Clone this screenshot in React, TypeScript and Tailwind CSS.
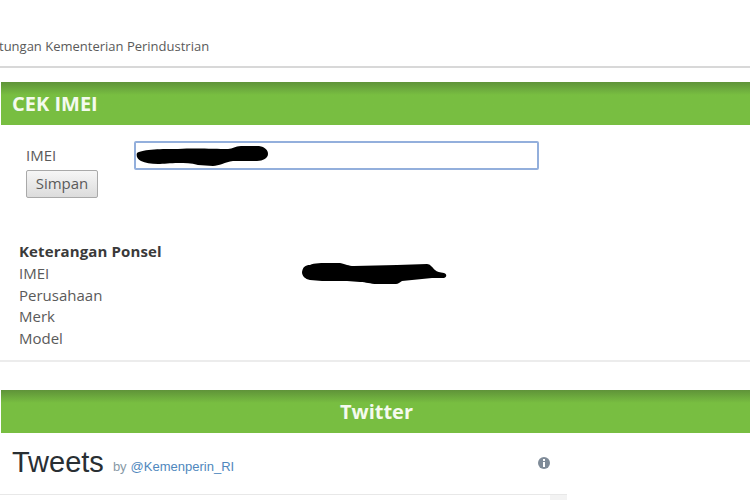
function GreenBar({ title, center }: { title: string; center?: boolean }) {
  return (
    <div
      className={`ml-px flex h-[43px] items-center bg-linear-to-b from-[#5f9339] to-[#78be41] to-[30%] text-[20px] font-bold text-[#f4faee] ${
        center ? "justify-center pl-[2px]" : "pl-[11px]"
      }`}
    >
      {title}
    </div>
  );
}

export default function App() {
  return (
    <div className="h-[500px] w-[750px] overflow-hidden bg-white font-['Open_Sans',sans-serif] text-[#4a4a4a]">
      {/* top strip */}
      <div className="flex h-[68px] items-start border-b-2 border-[#d8d8d8] pt-[38px] text-[13px] leading-[17px] text-[#5a5a5a]">
        <span className="-ml-px">tungan Kementerian Perindustrian</span>
      </div>

      <div className="mt-[14px]">
        <GreenBar title="CEK IMEI" />
      </div>

      {/* form */}
      <div className="pl-[26px] pt-[16px]">
        <div className="flex h-[29px] items-center text-[15px]">
          <label className="w-[108px] text-[#5a5a5a]">IMEI</label>
          <div className="relative h-[29px] w-[405px] rounded-[2px] border-2 border-[#93afdc] bg-white">
            <svg className="absolute -left-[1px] top-[3px]" width="134" height="20" viewBox="0 0 134 20">
              <path
                d="M2 7 C8 3 28 3 43 3 C60 2 80 3 93 3 C98 3 100 0 106 0 L124 0 C130 1 133 4 133 8 C133 12 128 15 122 15 L98 15 C90 16 84 20 78 20 L63 19 C56 17 50 17 43 17 C36 17 28 18 23 18 C16 18 10 17 6 15 C2 13 1 10 2 7 Z"
                fill="#000"
              />
            </svg>
          </div>
        </div>
        <button className="flex h-[28px] w-[72px] items-center justify-center rounded-[2px] border border-[#a9a9a9] bg-linear-to-b from-[#f6f6f6] to-[#dcdcdc] pb-[2px] text-[15px] text-[#5a5a5a]">
          Simpan
        </button>
      </div>

      {/* detail */}
      <div className="border-b-2 border-[#ececec] pb-[10.25px] pl-[19px] pt-[43px] text-[15px] leading-[21.75px] text-[#5a5a5a]">
        <div className="font-bold tracking-[0.12px] text-[#3a3a3a]">Keterangan Ponsel</div>
        <div className="flex items-center">
          <span className="w-[283px]">IMEI</span>
          <svg className="-my-2" width="146" height="24" viewBox="0 0 146 24">
            <path
              d="M0 10 C1 5 3 3 8 3 C12 1 20 1 28 1 L38 1 C44 2 46 4 52 4 L95 3 L125 2 C128 2 130 5 133 8 C135 10 138 10 142 11 C145 12 145 15 142 16 L130 16 L100 19 C98 20 96 22 94 22 L75 22 C68 22 64 20 58 20 L45 19 L20 19 L8 18 C3 17 0 14 0 10 Z"
              fill="#000"
            />
          </svg>
        </div>
        <div>Perusahaan</div>
        <div>Merk</div>
        <div>Model</div>
      </div>

      <div className="mt-[28px]">
        <GreenBar title="Twitter" center />
      </div>

      {/* tweets widget */}
      <div className="w-[567px]">
        <div className="flex h-[62px] items-center border-b border-[#e8e8e8] pb-[2px] pl-[12px] pr-[16px] font-['Liberation_Sans',sans-serif]">
          <span className="text-[29px] leading-none text-[#292f33]">Tweets</span>
          <span className="ml-[9px] mt-[9px] text-[13px] text-[#8899a6]">by</span>
          <span className="ml-[4px] mt-[9px] text-[13px] text-[#4f87bd]">@Kemenperin_RI</span>
          <svg className="ml-auto" width="14" height="14" viewBox="0 0 14 14">
            <circle cx="7" cy="7" r="6" fill="#7f8b98" />
            <rect x="6" y="6" width="2" height="5" fill="#fff" />
            <rect x="6" y="3" width="2" height="2" fill="#fff" />
          </svg>
        </div>
        <div className="ml-auto h-[5px] w-[17px] bg-[#f3f3f3]" />
      </div>
    </div>
  );
}
